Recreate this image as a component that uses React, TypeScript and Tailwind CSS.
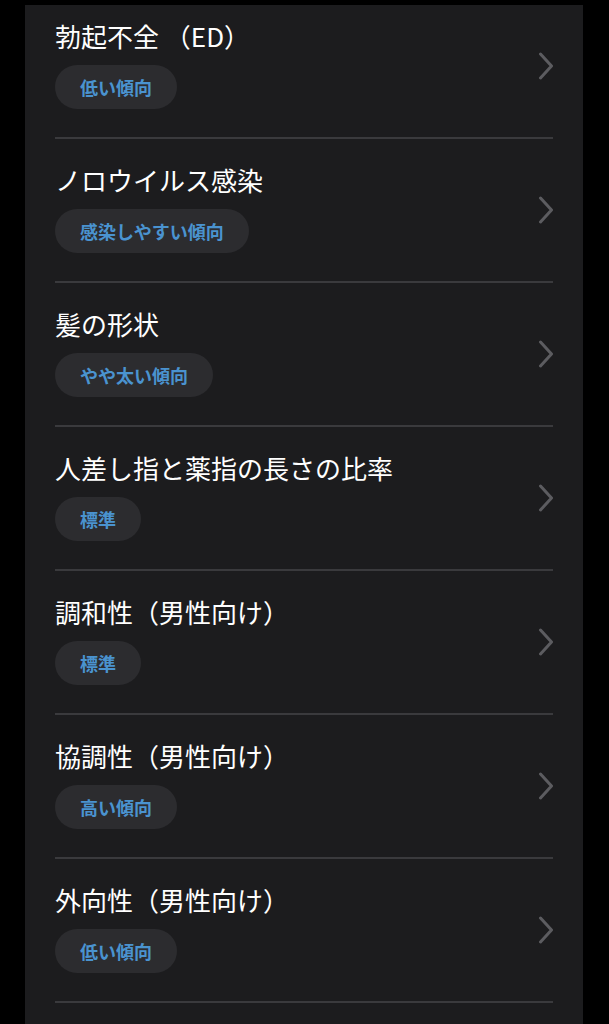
const items = [
  { title: "勃起不全 （ED）", tag: "低い傾向" },
  { title: "ノロウイルス感染", tag: "感染しやすい傾向" },
  { title: "髪の形状", tag: "やや太い傾向" },
  { title: "人差し指と薬指の長さの比率", tag: "標準" },
  { title: "調和性（男性向け）", tag: "標準" },
  { title: "協調性（男性向け）", tag: "高い傾向" },
  { title: "外向性（男性向け）", tag: "低い傾向" },
];

function Chevron() {
  return (
    <svg width="16" height="28" viewBox="0 0 16 28" fill="none" className="shrink-0">
      <polyline
        points="2.5,2 13.5,14 2.5,26"
        stroke="#5c5c60"
        strokeWidth="3"
        strokeLinecap="round"
        strokeLinejoin="round"
      />
    </svg>
  );
}

export default function App() {
  return (
    <div
      className="min-h-screen bg-black pt-[5px] pl-[25px] pr-[26px]"
      style={{ fontFamily: '"Noto Sans CJK JP", "Noto Sans", sans-serif' }}
    >
      <div className="bg-[#1c1c1e] h-[1019px] overflow-hidden">
        <div className="-mt-[10px] px-[30px]">
          {items.map((item) => (
            <div key={item.title} className="border-b-2 border-[#3a3a3d]">
              <div className="flex items-center justify-between pt-[25px] pb-[28px]">
                <div>
                  <div className="text-[26px] leading-[32px] text-white">{item.title}</div>
                  <div className="mt-[13px] inline-flex h-[44px] items-center rounded-full bg-[#2c2c2f] px-[25px] text-[18px] font-bold text-[#4a93cf]">
                    {item.tag}
                  </div>
                </div>
                <div className="-mr-[1px] mt-[3px]">
                  <Chevron />
                </div>
              </div>
            </div>
          ))}
        </div>
      </div>
    </div>
  );
}
